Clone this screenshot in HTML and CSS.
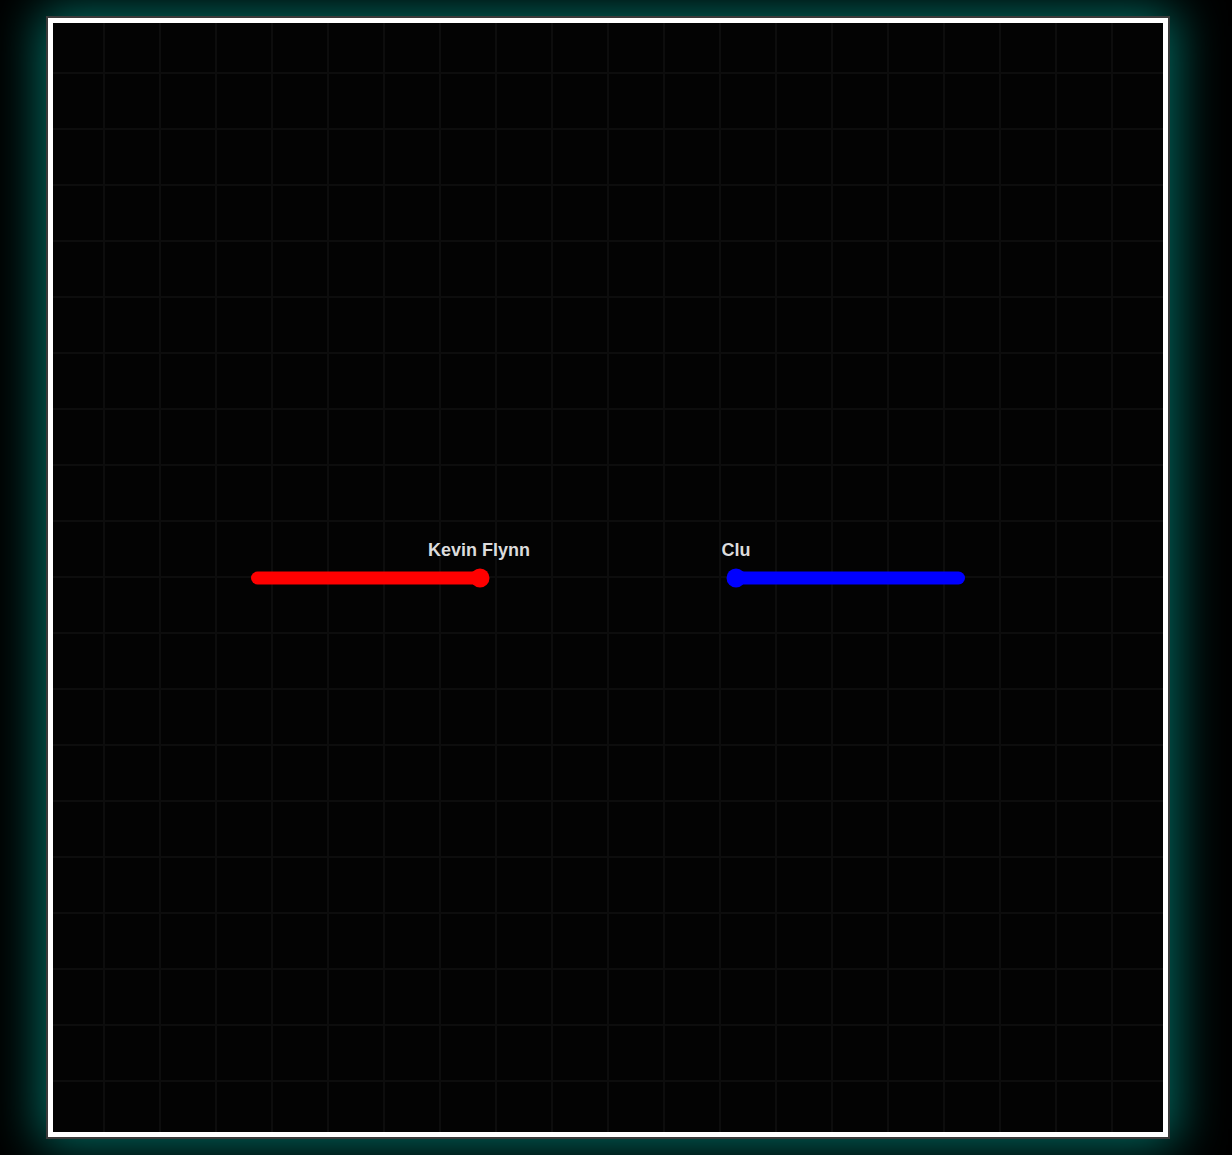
FILE: index.html
```html
<!DOCTYPE html>
<html lang="en">
<head>
<meta charset="utf-8">
<title>Light Cycle Arena</title>
<link rel="stylesheet" href="styles.css">
</head>
<body>
  <main class="frame">
    <div class="arena">
      <svg class="trails" width="1110" height="1109" viewBox="0 0 1110 1109" aria-hidden="true">
        <line x1="204.5" y1="555" x2="427" y2="555" stroke="#ff0000" stroke-width="13" stroke-linecap="round"/>
        <circle cx="427" cy="555" r="9.5" fill="#ff0000"/>
        <line x1="683" y1="555" x2="905.5" y2="555" stroke="#0000ff" stroke-width="13" stroke-linecap="round"/>
        <circle cx="683" cy="555" r="9.5" fill="#0000ff"/>
      </svg>
      <span class="label label-flynn">Kevin Flynn</span>
      <span class="label label-clu">Clu</span>
    </div>
  </main>
</body>
</html>
```

FILE: styles.css
```css
html, body {
  margin: 0;
  padding: 0;
  background: #000;
}

body {
  width: 1232px;
  height: 1155px;
  overflow: hidden;
  padding: 16px 0 0 46px;
  box-sizing: border-box;
  font-family: "Liberation Sans", Arial, sans-serif;
}

.frame {
  width: 1120px;
  border: 2px solid #3a3a3a;
  background: #3a3a3a;
  box-shadow: 0 0 46px 6px rgba(0, 215, 195, 0.5);
}

.arena {
  position: relative;
  width: 1110px;
  height: 1109px;
  border: 5px solid #ffffff;
  background-color: #030303;
  background-image:
    linear-gradient(to right, #0d0d0d 2px, transparent 2px),
    linear-gradient(to bottom, #0d0d0d 2px, transparent 2px);
  background-size: 56px 56px;
  background-position: 50px 49px;
  overflow: hidden;
}

.trails {
  position: absolute;
  left: 0;
  top: 0;
  display: block;
}

.label {
  position: absolute;
  top: 518px;
  font-size: 18px;
  line-height: 18px;
  font-weight: bold;
  color: #dcdcdc;
  white-space: nowrap;
  transform: translateX(-50%);
}

.label-flynn {
  left: 426px;
}

.label-clu {
  left: 683px;
}
```
